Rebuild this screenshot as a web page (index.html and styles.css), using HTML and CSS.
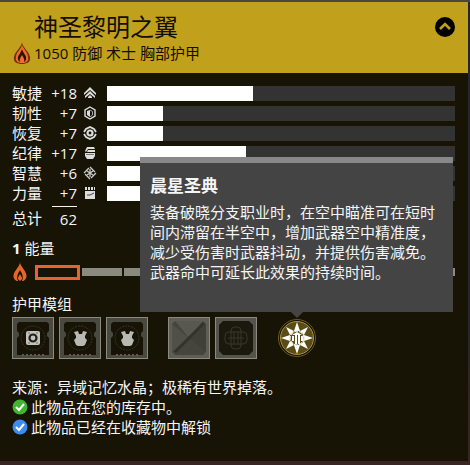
FILE: index.html
```
<!DOCTYPE html>
<html lang="zh-CN">
<head>
  <meta charset="UTF-8">
  <meta name="viewport" content="width=device-width, initial-scale=1.0">
  <title>神圣黎明之翼</title>
  <link rel="stylesheet" href="styles.css">
</head>
<body>
  <!-- Shared shapes -->
  <svg class="symbols" aria-hidden="true">
    <symbol id="flame" viewBox="0 0 16 22">
      <path fill-rule="evenodd" d="M8 0C8 4 14 9 15 14C16 18 13 21 10 21C12 18 11 13 8 9C5 13 4 18 6 21C3 21 0 18 1 14C2 9 8 5 8 0Z"/>
      <path d="M8 13C9 16 11 17 10 19C9 21 7 21 6 19C5 17 7 16 8 13Z"/>
    </symbol>
    <symbol id="socket" viewBox="0 0 42 42">
      <rect width="42" height="42" fill="#171407"/>
      <path fill-rule="evenodd" d="M1 1H41V41H1Z M5 7V14L7 16V19L5 21V38H37V21L35 19V16L37 14V7L35 5H7Z" fill="#4a493f"/>
      <circle cx="21" cy="21" r="12" fill="none" stroke="#38352a" stroke-dasharray="2 1"/>
      <path d="M10 38H33" stroke="#5d5c52" stroke-width="2" stroke-dasharray="2 2"/>
      <rect x=".5" y=".5" width="41" height="41" fill="none" stroke="#8b8a80"/>
    </symbol>
    <symbol id="chest" viewBox="0 0 42 42">
      <path d="M15 15L19 14L20 17H23L24 14L28 15L26 19V21L28 23L26 28L24 29H19L17 28L15 23L17 21V19Z" fill="#b9b8b2"/>
    </symbol>
  </svg>

  <div class="item-card">
    <header class="item-header">
      <div class="item-name">
        <h1>神圣黎明之翼</h1>
        <div class="item-subtitle">
          <svg class="element" viewBox="0 0 20 24">
            <path d="M10 1C10 6 17 10 18 16C19 21 15 23 10 23C5 23 1 21 2 16C3 10 10 6 10 1Z" fill="#70330c"/>
            <path d="M10 3C10 7 16 11 16 16C17 20 14 22 10 22C6 22 3 20 4 16C4 11 10 8 10 3Z" fill="#f26d2c"/>
            <path d="M10 8C11 12 15 15 14 18C14 20 12 21 12 21C13 18 11 16 10 14C9 16 7 18 8 21C8 21 6 20 6 18C5 15 9 12 10 8Z" fill="#2b1206"/>
          </svg>
          <span>1050 防御 术士 胸部护甲</span>
        </div>
      </div>
      <button class="collapse" aria-label="收起">
        <svg viewBox="0 0 20 20"><circle cx="10" cy="10" r="10" fill="#000"/><path d="M5 12L10 7L15 12" fill="none" stroke="#c1a01b" stroke-width="2.6"/></svg>
      </button>
    </header>

    <div class="item-body">
      <div class="stats">
        <div class="stat">
          <span>敏捷</span><span class="value">+18</span>
          <svg viewBox="0 0 14 14"><path d="M7 1L13 7V9L7 4L1 9V7Z M7 5L12 10V12L7 8L2 12V10Z M7 9L9 11V12H5V11Z"/></svg>
          <div class="bar"><div class="fill" style="width: 42%"></div></div>
        </div>
        <div class="stat">
          <span>韧性</span><span class="value">+7</span>
          <svg viewBox="0 0 14 14"><path d="M7 1L12 4V10L7 13L2 10V4Z" fill="none" stroke="#ddd" stroke-width="1.4"/><path d="M7 4L4 5V9L7 11Z"/><path d="M7 4L9.500 5.500V9L7 11" fill="none" stroke="#aaa"/></svg>
          <div class="bar"><div class="fill" style="width: 16%"></div></div>
        </div>
        <div class="stat">
          <span>恢复</span><span class="value">+7</span>
          <svg viewBox="0 0 14 14"><path d="M1 6L3 3L7 1L11 3L13 6M13 8L11 11L7 13L3 11L1 8" fill="none" stroke="#ddd" stroke-width="1.8"/><circle cx="7" cy="7" r="2.500" fill="none" stroke="#ddd" stroke-width="2.200"/></svg>
          <div class="bar"><div class="fill" style="width: 16%"></div></div>
        </div>
        <div class="stat">
          <span>纪律</span><span class="value">+17</span>
          <svg viewBox="0 0 14 14"><path d="M4 1H11L12 3H5L3 6L2 5Z M5 4H12V6H4Z M2 7H12V10L10 13H4L2 10Z"/><path d="M3 8.500H11" stroke="#777"/></svg>
          <div class="bar"><div class="fill" style="width: 40%"></div></div>
        </div>
        <div class="stat">
          <span>智慧</span><span class="value">+6</span>
          <svg viewBox="0 0 14 14"><path d="M7 1L13 7L7 13L1 7Z" fill="none" stroke="#ccc" stroke-width="1.3" stroke-dasharray="7 1.500"/><path d="M7 3V11M4 5L10 9M10 5L4 9" stroke="#ccc" stroke-width="1.3"/></svg>
          <div class="bar"><div class="fill" style="width: 14%"></div></div>
        </div>
        <div class="stat">
          <span>力量</span><span class="value">+7</span>
          <svg viewBox="0 0 14 14"><path d="M2 1H4V4H2Z M5 1H7V4H5Z M8 1H10V4H8Z M11 1H12V4H11Z M2 5H12V13H2Z"/><path d="M4 9H7L11 7" fill="none" stroke="#444"/></svg>
          <div class="bar"><div class="fill" style="width: 16%"></div></div>
        </div>
        <div class="stat total">
          <span>总计</span><span class="value">62</span>
        </div>
      </div>

      <div class="energy">
        <div><b>1</b> 能量</div>
        <div class="energy-meter">
          <svg viewBox="0 0 16 22"><use href="#flame"/></svg>
          <i class="used"></i><i></i><i></i><i></i><i></i><i></i><i></i><i></i><i></i><i></i>
        </div>
      </div>

      <div class="mods">
        <div>护甲模组</div>
        <div class="mod-row">
          <button class="mod" aria-label="通用模组">
            <svg viewBox="0 0 42 42"><use href="#socket"/><rect x="14" y="14" width="14" height="14" rx="2" fill="#c3c2bc"/><circle cx="21" cy="21" r="3.500" fill="#c3c2bc" stroke="#222016" stroke-width="2.200"/><path d="M17 15V17M25 15V17M17 25V27M25 25V27" stroke="#6d6c64"/></svg>
          </button>
          <button class="mod" aria-label="胸甲模组">
            <svg viewBox="0 0 42 42"><use href="#socket"/><use href="#chest"/></svg>
          </button>
          <button class="mod" aria-label="胸甲模组">
            <svg viewBox="0 0 42 42"><use href="#socket"/><use href="#chest"/></svg>
          </button>
          <button class="mod cosmetic" aria-label="着色器">
            <svg viewBox="0 0 42 42">
              <rect width="42" height="42" fill="#5f5e56"/>
              <path d="M7 4H35L38 7V35L35 38H7L4 35V7Z" fill="#45443d"/>
              <path d="M7 4H35L21 21Z" fill="#595850"/><path d="M4 7L21 21L4 35Z" fill="#504f48"/><path d="M38 7V35L21 21Z" fill="#403f38"/>
              <path d="M7 35L36 6" stroke="#33322b" stroke-width="3"/>
              <rect x=".5" y=".5" width="41" height="41" fill="none" stroke="#8b8a80"/>
            </svg>
          </button>
          <button class="mod" aria-label="皮肤">
            <svg viewBox="0 0 42 42">
              <rect width="42" height="42" fill="#55544c"/>
              <path d="M8 4H34L38 8V34L34 38H8L4 34V8Z" fill="#1b180d"/>
              <g fill="none" stroke="#38362c"><rect x="16" y="10" width="10" height="22" rx="4"/><rect x="10" y="15" width="22" height="12" rx="4"/><path d="M19 14V28M23 14V28M13 21H29"/></g>
              <rect x=".5" y=".5" width="41" height="41" fill="none" stroke="#8b8a80"/>
            </svg>
          </button>
          <button class="mod perk" aria-label="晨星圣典">
            <svg viewBox="0 0 42 42">
              <circle cx="21" cy="21" r="18.500" fill="#12100a" stroke="#6d5c20"/>
              <circle cx="21" cy="21" r="16.500" fill="#5a4c17" stroke="#ad943b"/>
              <path d="M21 5L24 14H18Z M21 37L24 28H18Z M5 21L14 18V24Z M37 21L28 18V24Z M10 10L18 14L14 18Z M32 10L28 18L24 14Z M10 32L14 24L18 28Z M32 32L24 28L28 24Z" fill="#fff"/>
              <circle cx="21" cy="21" r="7" fill="#5a4c17" stroke="#eee9d8" stroke-width="1.500" stroke-dasharray="4 1"/>
              <path d="M17 19V24M20 18V27M23 18V27M26 19V24" stroke="#fff" stroke-width="2"/>
              <path d="M16 18L21 15L26 18Z" fill="#fff"/>
            </svg>
          </button>
        </div>
        <div class="tooltip" role="tooltip">
          <h2>晨星圣典</h2>
          <p>装备破晓分支职业时，在空中瞄准可在短时间内滞留在半空中，增加武器空中精准度，减少受伤害时武器抖动，并提供伤害减免。武器命中可延长此效果的持续时间。</p>
        </div>
      </div>

      <div class="source">
        <div>来源：异域记忆水晶；极稀有世界掉落。</div>
        <div class="check"><svg viewBox="0 0 16 16"><circle cx="8" cy="8" r="7.500" fill="#40b52f"/><path d="M4 8L7 11L12 5" fill="none" stroke="#fff" stroke-width="2"/></svg>此物品在您的库存中。</div>
        <div class="check"><svg viewBox="0 0 16 16"><circle cx="8" cy="8" r="7.500" fill="#3c8cf0"/><path d="M4 8L7 11L12 5" fill="none" stroke="#fff" stroke-width="2"/></svg>此物品已经在收藏物中解锁</div>
      </div>
    </div>
  </div>
</body>
</html>
```
FILE: styles.css
```
* {
  box-sizing: border-box;
}

body {
  margin: 0;
  padding: 2px 2px 4px 0;
  min-height: 100vh;
  display: flex;
  background: linear-gradient(to bottom, #4a4642 2px, #282629 2px, #282629 70%, #3a2523);
  color: #f5f5f5;
  font-family: "Open Sans", "Noto Sans CJK SC", sans-serif;
  font-size: 15px;
  line-height: 20px;
}

button {
  padding: 0;
  border: none;
  background: none;
  cursor: pointer;
}

svg {
  display: block;
}

.symbols {
  position: absolute;
  width: 0;
  height: 0;
}

.item-card {
  flex: 1;
  min-width: 0;
  background: #171305;
}

/* Header */
.item-header {
  display: flex;
  justify-content: space-between;
  align-items: flex-start;
  padding: 10px 13px 9px 12px;
  background: #c1a01b;
  color: #120e03;
}

.item-header h1 {
  margin: 0 0 0 22px;
  font-size: 24px;
  font-weight: 400;
  line-height: 30px;
}

.item-subtitle {
  display: flex;
  align-items: center;
  gap: 2px;
  height: 22px;
}

.element {
  width: 20px;
  height: 24px;
}

.collapse {
  margin-top: 5px;
}

.collapse svg {
  width: 20px;
  height: 20px;
}

.item-body {
  padding: 10px 13px 0 12px;
}

/* Stats */
.stat {
  display: grid;
  grid-template-columns: 34px 31px 14px 1fr;
  align-items: center;
  height: 20px;
}

.stat .value {
  text-align: right;
}

.stat svg {
  width: 14px;
  height: 14px;
  margin-left: 6px;
  fill: #ddd;
}

.bar {
  height: 15px;
  margin-left: 16px;
  background: #333;
}

.fill {
  height: 100%;
  background: #fff;
}

.stat.total {
  height: 24px;
  margin-top: 2px;
}

.total .value {
  margin-left: 6px;
  border-top: 1px solid #f5f5f5;
}

.total span {
  padding-top: 2px;
}

/* Energy */
.energy {
  margin-top: 9px;
}

.energy-meter {
  display: flex;
  align-items: center;
  gap: 2px;
  height: 22px;
  margin-top: 3px;
}

.energy-meter svg {
  width: 16px;
  height: 20px;
  margin: 0 5px 0 0;
  fill: #e5662a;
}

.energy-meter i {
  flex: 1;
  height: 8px;
  background: #8b8a80;
}

.energy-meter .used {
  flex: 0 0 45px;
  height: 15px;
  border: 3px solid #e5662a;
  background: none;
}

/* Mods */
.mods {
  position: relative;
  margin-top: 11px;
}

.mod-row {
  display: flex;
  gap: 5px;
  margin-top: 3px;
}

.mod svg {
  width: 42px;
  height: 42px;
}

.mod.cosmetic {
  margin-left: 15px;
}

.mod.perk {
  margin-left: 14px;
}

.tooltip {
  position: absolute;
  left: 128px;
  right: 2px;
  bottom: 47px;
  padding: 13px 10px 30px;
  border-top: 6px solid #888;
  background: #444;
}

.tooltip::after {
  content: "";
  position: absolute;
  top: 100%;
  left: 151px;
  border: 6px solid transparent;
  border-top-color: #444;
}

.tooltip h2 {
  margin: 0 0 6px;
  font-size: 17px;
  font-weight: 700;
  line-height: 20px;
}

.tooltip p {
  margin: 0;
}

/* Source */
.source {
  margin-top: 18px;
}

.check {
  display: flex;
  align-items: center;
  gap: 3px;
}

.check svg {
  width: 16px;
  height: 16px;
}
```
